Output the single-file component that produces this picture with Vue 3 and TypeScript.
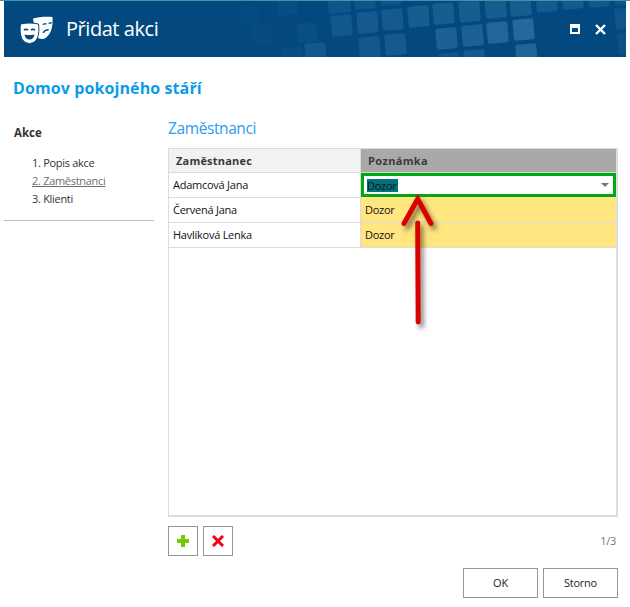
<script setup lang="ts">
const squares: [number, number, number, number, number][] = [
  [328, -8, 22, 21, 0.1], [354, -12, 21, 21, 0.1], [380, -16, 21, 21, 0.1],
  [331, 15, 21, 21, 0.12], [357, 12, 21, 21, 0.14], [382, 9, 21, 21, 0.14],
  [408, 6, 21, 21, 0.16], [433, 3, 21, 21, 0.16], [459, 1, 21, 21, 0.16],
  [485, -3, 21, 21, 0.16], [510, -5, 21, 21, 0.16], [536, -9, 21, 21, 0.14],
  [562, -12, 21, 21, 0.14], [588, -14, 21, 21, 0.12], [614, -16, 21, 21, 0.1],
  [359, 37, 21, 21, 0.13], [385, 34, 21, 21, 0.14], [436, 28, 21, 21, 0.2],
  [462, 25, 21, 21, 0.2], [487, 22, 21, 21, 0.24], [513, 19, 21, 21, 0.26],
  [615, 8, 21, 21, 0.1], [618, 33, 21, 21, 0.08], [305, 43, 21, 21, 0.12],
  [439, 53, 21, 21, 0.1], [464, 50, 21, 21, 0.14], [516, 44, 21, 21, 0.22],
  [277, -6, 20, 21, 0.04], [253, 24, 20, 20, 0.03], [283, 47, 20, 20, 0.04],
  [297, 23, 20, 20, 0.05], [240, 4, 20, 20, 0.02]
]
const rows = [
  { name: 'Adamcová Jana', note: 'Dozor', editing: true },
  { name: 'Červená Jana', note: 'Dozor', editing: false },
  { name: 'Havlíková Lenka', note: 'Dozor', editing: false }
]
</script>

<template>
  <div class="window">
    <header class="titlebar">
      <svg class="pattern" width="622" height="56" viewBox="4 1 622 56" aria-hidden="true">
        <rect
          v-for="(s, i) in squares"
          :key="i"
          :x="s[0]" :y="s[1]" :width="s[2]" :height="s[3]" rx="2"
          :opacity="s[4]" fill="#7fc4ee"
          :transform="`rotate(-5 ${s[0] + 10} ${s[1] + 10})`"
        />
      </svg>
      <svg class="masks" width="34" height="28" viewBox="0 0 34 28" aria-hidden="true">
        <path fill="#fff" d="M13 2.500C19 .8 26 .3 32.500 1c.3 4.500.1 8.500-1 12-1.200 4.500-4 8.500-7.500 9.800-2 .5-4 .2-6-.8L14 8z" />
        <path fill="#03497f" d="M22.500 7.800l3.800-.8.300 1.300-3.800.8zM28.500 6.700l3-.6.2 1.300-3 .6zM22.500 17c.8-2.500 3.200-4 6.500-4-.3.800-.4 1.200-.8 1.900-2-.3-3.300.7-4 2.100z" />
        <path fill="#fff" stroke="#03497f" stroke-width="1" d="M.5 8c6-1.300 12-1.300 18 0 .7 5 .5 10-1 14-1.300 3-4.600 5.500-8 5.500-3.400 0-6.700-2.500-8-5.500C0 18-.2 13 .5 8z" />
        <path fill="#03497f" d="M3.500 13.500c1-1.300 3.700-1.300 5 0l-.9 1.200c-.9-.6-2.300-.6-3.200 0zM10.500 13.500c1-1.300 3.700-1.300 5 0l-.9 1.200c-.9-.6-2.300-.6-3.200 0zM4.500 18.500c3.200.8 6.800.8 10 0-.3 3-2.300 5-5 5s-4.700-2-5-5z" />
      </svg>
      <h1 class="title">Přidat akci</h1>
      <div class="controls">
        <span class="maximize"></span>
        <svg width="11" height="11" viewBox="0 0 11 11" aria-hidden="true">
          <path d="M1 1l9 9M10 1l-9 9" stroke="#fff" stroke-width="2.400" fill="none" />
        </svg>
      </div>
    </header>

    <h2 class="org">Domov pokojného stáří</h2>

    <div class="content">
      <aside class="sidebar">
        <div class="side-title">Akce</div>
        <ol class="steps">
          <li>1. Popis akce</li>
          <li class="active">2. Zaměstnanci</li>
          <li>3. Klienti</li>
        </ol>
      </aside>

      <main class="main">
        <h3 class="section">Zaměstnanci</h3>
        <div class="grid-box">
          <div class="row head">
            <div class="cell name">Zaměstnanec</div>
            <div class="cell note">Poznámka</div>
          </div>
          <div v-for="r in rows" :key="r.name" class="row" :class="{ editing: r.editing }">
            <div class="cell name">{{ r.name }}</div>
            <div v-if="r.editing" class="cell editor">
              <span class="selected">{{ r.note }}</span>
              <span class="caret"></span>
            </div>
            <div v-else class="cell note">{{ r.note }}</div>
          </div>
        </div>

        <div class="toolbar">
          <button class="icon-btn" type="button" aria-label="Přidat">
            <svg width="12" height="12" viewBox="0 0 12 12"><path fill="#76c800" d="M4 0h4v4h4v4H8v4H4V8H0V4h4z" /></svg>
          </button>
          <button class="icon-btn" type="button" aria-label="Smazat">
            <svg width="12" height="12" viewBox="0 0 12 12"><path d="M1 1l10 10M11 1L1 11" stroke="#f5000f" stroke-width="3" fill="none" /></svg>
          </button>
          <span class="pager">1/3</span>
        </div>

        <div class="actions">
          <button class="btn" type="button">OK</button>
          <button class="btn" type="button">Storno</button>
        </div>
      </main>
    </div>

    <svg class="arrow" width="60" height="150" viewBox="390 190 60 150" aria-hidden="true">
      <defs>
        <filter id="arrow-shadow" x="-50%" y="-20%" width="200%" height="140%">
          <feDropShadow dx="3" dy="4" stdDeviation="2.500" flood-color="#000" flood-opacity="0.5" />
        </filter>
      </defs>
      <g filter="url(#arrow-shadow)" fill="none" stroke="#d90000" stroke-width="5" stroke-linecap="round" stroke-linejoin="miter">
        <path d="M404 223.500L417.700 199L431 223.500" />
        <path d="M417.700 223L418.200 322" />
      </g>
    </svg>
  </div>
</template>

<style>
html, body { margin: 0; background: #fff; }
</style>

<style scoped>
.window {
  position: relative;
  width: 630px;
  height: 607px;
  box-sizing: border-box;
  border-top: 1px solid #3a97a8;
  background: #fff;
  overflow: hidden;
  font-family: "Open Sans", "Noto Sans", sans-serif;
  font-size: 11px;
  letter-spacing: -0.25px;
  color: #222;
}
.titlebar {
  position: relative;
  display: flex;
  align-items: center;
  height: 56px;
  margin: 0 4px;
  padding-left: 16px;
  background: #03497f;
  color: #fff;
  overflow: hidden;
}
.pattern { position: absolute; left: 0; top: 0; }
.masks { position: relative; flex: none; margin-top: 1px; }
.title {
  position: relative;
  margin: 0 0 1px 12px;
  font-size: 20px;
  font-weight: 400;
  letter-spacing: -0.45px;
}
.controls {
  position: relative;
  display: flex;
  align-items: center;
  gap: 15px;
  margin-left: auto;
  margin-right: 20px;
}
.maximize {
  display: block;
  box-sizing: border-box;
  width: 10px;
  height: 10px;
  border: 2px solid #fff;
  border-top-width: 4px;
}
.org {
  margin: 20px 0 0 13px;
  height: 22px;
  line-height: 22px;
  font-size: 16px;
  font-weight: 700;
  letter-spacing: 0.1px;
  color: #0c9be8;
}
.content { display: flex; margin-top: 18px; margin-left: 4px; }
.sidebar {
  box-sizing: border-box;
  width: 150px;
  height: 103px;
  margin-top: 1px;
  padding: 7px 0 0 10px;
  border-bottom: 1px solid #bdbdbd;
  margin-right: 14px;
}
.side-title { font-weight: 700; font-size: 11.500px; line-height: 16px; letter-spacing: 0; color: #333; }
.steps { list-style: none; margin: 13px 0 0; padding: 0 0 0 18px; }
.steps li { line-height: 18px; color: #333; letter-spacing: -0.3px; }
.steps .active { color: #6e6e6e; text-decoration: underline; }
.main { width: 450px; }
.section {
  margin: 0;
  height: 22px;
  line-height: 22px;
  font-size: 15.500px;
  font-weight: 400;
  color: #2b9cf0;
  letter-spacing: -0.4px;
}
.grid-box {
  box-sizing: border-box;
  height: 369px;
  margin-top: 9px;
  border: 1px solid #dcdcdc;
  border-width: 1px 2px 2px 1px;
}
.row {
  display: grid;
  grid-template-columns: 192px 1fr;
  height: 25px;
  box-sizing: border-box;
  border-bottom: 1px solid #dcdcdc;
}
.row.head { height: 24px; }
.cell {
  display: flex;
  align-items: center;
  padding: 0 0 1px 4px;
  color: #111;
}
.name { border-right: 1px solid #dcdcdc; }
.note { background: #ffe680; }
.row.editing + .row .note { margin-top: -1px; padding-bottom: 0; }
.head .name {
  padding: 0 0 1px 7px;
  background: #f2f2f2;
  font-weight: 700;
  color: #3a3a3a;
  letter-spacing: 0.2px;
}
.head .note {
  padding: 0 0 0 7px;
  background: #a9a9a9;
  font-weight: 700;
  color: #3a3a3a;
  letter-spacing: 0.35px;
}
.editor {
  position: relative;
  box-sizing: border-box;
  padding: 0 0 0 3px;
  border: 3px solid #00a914;
  background: #fff;
}
.selected {
  padding: 0 1px 0 0;
  line-height: 13px;
  background: #00727c;
  color: #111;
}
.caret {
  position: absolute;
  right: 4px;
  top: 7px;
  width: 0;
  height: 0;
  border: 4px solid transparent;
  border-top: 4px solid #777;
  border-bottom-width: 0;
}
.toolbar { display: flex; align-items: center; gap: 5px; margin-top: 9px; }
.icon-btn {
  display: flex;
  align-items: center;
  justify-content: center;
  width: 30px;
  height: 30px;
  padding: 0;
  border: 1px solid #969696;
  background: #fff;
}
.pager { margin-left: auto; margin-right: 2px; padding-bottom: 2px; color: #777; font-size: 11px; }
.actions { display: flex; justify-content: flex-end; gap: 5px; margin-top: 12px; }
.btn {
  width: 75px;
  height: 30px;
  padding: 0 0 2px;
  border: 1px solid #969696;
  background: #fff;
  color: #222;
  font: inherit;
  letter-spacing: inherit;
}
.arrow { position: absolute; left: 390px; top: 189px; pointer-events: none; }
</style>
